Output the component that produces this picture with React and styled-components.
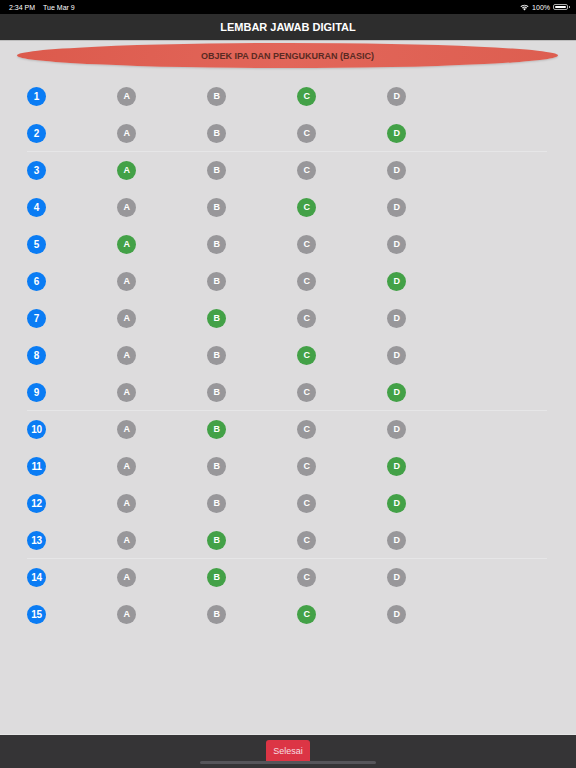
import styled, { createGlobalStyle } from "styled-components";

const GlobalStyle = createGlobalStyle`
  html, body {
    margin: 0;
    padding: 0;
    background: #dddcdd;
    font-family: "Liberation Sans", Arial, sans-serif;
  }
`;

const answers = ["C", "D", "A", "C", "A", "D", "B", "C", "D", "B", "D", "D", "B", "B", "C"];
const dividers = [2, 9, 13];
const letters = ["A", "B", "C", "D"];

const App = () => {
  return (
    <Page>
      <GlobalStyle />
      <StatusBar>
        <StatusLeft>
          <span>2:34 PM</span>
          <span>Tue Mar 9</span>
        </StatusLeft>
        <StatusRight>
          <svg width="9" height="7" viewBox="0 0 12 9">
            <path d="M6 8.5 L8 6.3 A3 3 0 0 0 4 6.3 Z" fill="#fff" />
            <path d="M2.6 4.9 A4.9 4.9 0 0 1 9.4 4.9 L8.5 5.8 A3.6 3.6 0 0 0 3.5 5.8 Z" fill="#fff" />
            <path d="M0.6 2.9 A7.8 7.8 0 0 1 11.4 2.9 L10.4 3.9 A6.4 6.4 0 0 0 1.6 3.9 Z" fill="#fff" />
          </svg>
          <span>100%</span>
          <Battery>
            <BatteryFill />
          </Battery>
        </StatusRight>
      </StatusBar>

      <Header>LEMBAR JAWAB DIGITAL</Header>

      <Main>
        <Pill>OBJEK IPA DAN PENGUKURAN (BASIC)</Pill>
        <List>
          {answers.map((ans, i) => (
            <Row key={i} $divider={dividers.includes(i + 1)}>
              <Dot $kind="number">{i + 1}</Dot>
              {letters.map((l) => (
                <Dot key={l} $kind={l === ans ? "picked" : "idle"}>{l}</Dot>
              ))}
            </Row>
          ))}
        </List>
      </Main>

      <Footer>
        <DoneButton>Selesai</DoneButton>
        <HomeBar />
      </Footer>
    </Page>
  );
};

export default App;

const Page = styled.div`
  width: 576px;
  height: 768px;
  display: flex;
  flex-direction: column;
  overflow: hidden;
`;

const StatusBar = styled.div`
  height: 14px;
  background: #000;
  color: #fff;
  font-size: 7px;
  display: flex;
  align-items: center;
  justify-content: space-between;
  padding: 0 8px 0 9px;
`;

const StatusLeft = styled.div`
  display: flex;
  gap: 8px;
`;

const StatusRight = styled.div`
  display: flex;
  align-items: center;
  gap: 3px;
`;

const Battery = styled.div`
  width: 15px;
  height: 6px;
  border: 1px solid #aaa;
  border-radius: 2px;
  padding: 1px;
  box-sizing: border-box;
  position: relative;
  display: flex;

  &::after {
    content: "";
    position: absolute;
    right: -3px;
    top: 1px;
    width: 1px;
    height: 2px;
    background: #aaa;
  }
`;

const BatteryFill = styled.div`
  flex: 1;
  background: #fff;
  border-radius: 1px;
`;

const Header = styled.div`
  height: 26px;
  background: #2d2d2d;
  color: #fff;
  font-size: 11px;
  font-weight: bold;
  display: flex;
  align-items: center;
  justify-content: center;
  border-bottom: 1px solid #bdbdbd;
`;

const Main = styled.div`
  flex: 1;
  background: #dddcdd;
  padding-top: 2px;
`;

const Pill = styled.div`
  margin: 0 18px 0 17px;
  height: 25px;
  border-radius: 50%;
  background: linear-gradient(100deg, #dc5a4c 0%, #e2665a 50%, #dd5e50 100%);
  color: #5a2a22;
  font-size: 9px;
  font-weight: bold;
  display: flex;
  align-items: center;
  justify-content: center;
  box-shadow: 0 1px 2px rgba(0, 0, 0, 0.15);
`;

const List = styled.div`
  padding: 10px 0 0 27px;
`;

const Row = styled.div`
  display: grid;
  grid-template-columns: repeat(5, 90px);
  align-items: center;
  height: 37px;
  margin-right: 29px;
  border-bottom: 1px solid ${(p) => (p.$divider ? "#e6e6e7" : "transparent")};
  box-sizing: border-box;
`;

const dotColors = {
  number: "#0a7cf4",
  picked: "#43a147",
  idle: "#98979a",
};

const Dot = styled.div`
  width: 19px;
  height: 19px;
  border-radius: 50%;
  background: ${(p) => dotColors[p.$kind]};
  color: #fff;
  font-size: ${(p) => (p.$kind === "number" ? "10px" : "9px")};
  font-weight: bold;
  display: flex;
  align-items: center;
  justify-content: center;
  letter-spacing: -0.3px;
`;

const Footer = styled.div`
  height: 33px;
  background: #353436;
  border-top: 1px solid #e6e6e6;
  display: flex;
  justify-content: center;
  position: relative;
`;

const DoneButton = styled.div`
  margin-top: 5px;
  width: 44px;
  height: 21px;
  background: #dc3545;
  color: #f6dfe2;
  font-size: 9px;
  border-radius: 3px 3px 0 0;
  display: flex;
  align-items: center;
  justify-content: center;
`;

const HomeBar = styled.div`
  position: absolute;
  left: 200px;
  bottom: 4px;
  width: 176px;
  height: 3px;
  border-radius: 2px;
  background: #56555a;
`;
